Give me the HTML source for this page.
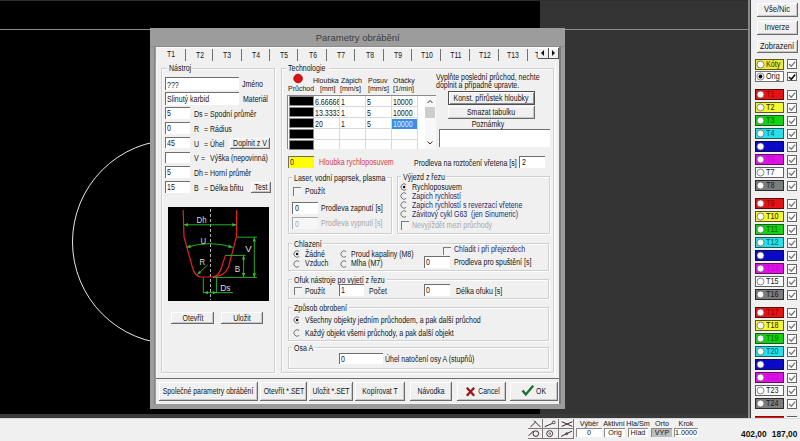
<!DOCTYPE html>
<html><head><meta charset="utf-8"><style>
html,body{margin:0;padding:0;}
body{width:800px;height:441px;position:relative;overflow:hidden;background:#000;font-family:"Liberation Sans",sans-serif;}
.a{position:absolute;}
.t{position:absolute;white-space:nowrap;line-height:1;font-family:"Liberation Sans",sans-serif;transform-origin:0 0;}
svg text{stroke-width:0.2px;}
</style></head><body>

<div class="a" style="left:0.00px;top:0.00px;width:540.00px;height:414.00px;background:#000;"></div>
<div class="a" style="left:540.00px;top:0.00px;width:208.00px;height:418.00px;background:#343434;"></div>
<div class="a" style="left:0.00px;top:0.00px;width:748.00px;height:1.00px;background:#2e2e2e;"></div>
<div class="a" style="left:0.00px;top:414.00px;width:748.00px;height:4.00px;background:#3a3a3a;"></div>
<div class="a" style="left:0.00px;top:28.60px;width:748.00px;height:1.20px;background:#8c8c8c;"></div>
<div class="a" style="left:748.00px;top:0.00px;width:2.00px;height:418.00px;background:#8a8a8a;"></div>
<div class="a" style="left:750.00px;top:0.00px;width:1.00px;height:418.00px;background:#3c3c3c;"></div>
<svg class="a" style="left:0;top:0" width="800" height="441"><circle cx="174.5" cy="242" r="102" fill="none" stroke="#e8e8e8" stroke-width="1"/></svg>
<div class="a" style="left:751.00px;top:0.00px;width:49.00px;height:418.00px;background:#f0f0f0;"></div>
<div class="a" style="left:756.50px;top:3.00px;width:41.00px;height:13.50px;background:#f0f0f0;box-sizing:border-box;border-right:1px solid #6a6a6a;border-bottom:1px solid #6a6a6a;box-shadow:inset 1px 1px #fff, inset -1px -1px #c8c8c8;"></div>
<div class="t" style="left:677.00px;width:200px;text-align:center;top:5.20px;font-size:8.8px;color:#161616;transform-origin:50% 0;transform:scaleX(0.86);">Vše/Nic</div>
<div class="a" style="left:756.50px;top:21.00px;width:41.00px;height:13.50px;background:#f0f0f0;box-sizing:border-box;border-right:1px solid #6a6a6a;border-bottom:1px solid #6a6a6a;box-shadow:inset 1px 1px #fff, inset -1px -1px #c8c8c8;"></div>
<div class="t" style="left:677.00px;width:200px;text-align:center;top:23.20px;font-size:8.8px;color:#161616;transform-origin:50% 0;transform:scaleX(0.86);">Inverze</div>
<div class="a" style="left:756.50px;top:39.50px;width:41.00px;height:13.50px;background:#f0f0f0;box-sizing:border-box;border-right:1px solid #6a6a6a;border-bottom:1px solid #6a6a6a;box-shadow:inset 1px 1px #fff, inset -1px -1px #c8c8c8;"></div>
<div class="t" style="left:677.00px;width:200px;text-align:center;top:41.70px;font-size:8.8px;color:#161616;transform-origin:50% 0;transform:scaleX(0.86);">Zobrazení</div>
<div class="a" style="left:755.00px;top:58.50px;width:29.00px;height:11.00px;background:#eaea40;border:1px solid #5a5a20;box-sizing:border-box;"></div>
<svg class="a" style="left:755px;top:58.5px" width="12" height="11"><circle cx="5.5" cy="5.5" r="3.5" fill="#fff" stroke="#555" stroke-width="0.7"/></svg>
<div class="t" style="left:766.30px;top:59.50px;font-size:8.5px;color:#2a2a00;transform:scaleX(0.85);">Kóty</div>
<div class="a" style="left:787.20px;top:59.10px;width:10.00px;height:9.50px;background:#fff;border:1px solid #666;box-sizing:border-box;"></div>
<svg class="a" style="left:787.2px;top:59.1px" width="10" height="10"><path d="M2 5 L4.3 7.3 L8.2 2.6" fill="none" stroke="#7a7a7a" stroke-width="1.35"/></svg>
<div class="a" style="left:755.00px;top:71.30px;width:29.00px;height:11.00px;background:#fff;border:1px solid #707070;box-sizing:border-box;"></div>
<svg class="a" style="left:755px;top:71.3px" width="12" height="11"><circle cx="5.5" cy="5.5" r="3.5" fill="#fff" stroke="#555" stroke-width="0.7"/><circle cx="5.5" cy="5.5" r="1.9" fill="#000"/></svg>
<div class="t" style="left:766.30px;top:72.30px;font-size:8.5px;color:#111;transform:scaleX(0.85);">Orig</div>
<div class="a" style="left:787.20px;top:71.90px;width:10.00px;height:9.50px;background:#fff;border:1px solid #666;box-sizing:border-box;"></div>
<svg class="a" style="left:787.2px;top:71.89999999999999px" width="10" height="10"><path d="M2 5 L4.3 7.3 L8.2 2.6" fill="none" stroke="#111" stroke-width="1.6"/></svg>
<div class="a" style="left:755.00px;top:89.45px;width:29.00px;height:11.00px;background:#e41414;border:1px solid #5a0a0a;box-sizing:border-box;"></div>
<svg class="a" style="left:755px;top:89.45px" width="12" height="11"><circle cx="5.5" cy="5.5" r="3.5" fill="#fff" stroke="#555" stroke-width="0.7"/></svg>
<div class="t" style="left:766.30px;top:90.45px;font-size:8.5px;color:#8a0000;transform:scaleX(0.85);">T1</div>
<div class="a" style="left:787.20px;top:90.05px;width:10.00px;height:9.50px;background:#fff;border:1px solid #666;box-sizing:border-box;"></div>
<svg class="a" style="left:787.2px;top:90.05px" width="10" height="10"><path d="M2 5 L4.3 7.3 L8.2 2.6" fill="none" stroke="#7a7a7a" stroke-width="1.35"/></svg>
<div class="a" style="left:755.00px;top:102.45px;width:29.00px;height:11.00px;background:#f8f830;border:1px solid #5a5a20;box-sizing:border-box;"></div>
<svg class="a" style="left:755px;top:102.45px" width="12" height="11"><circle cx="5.5" cy="5.5" r="3.5" fill="#fff" stroke="#555" stroke-width="0.7"/></svg>
<div class="t" style="left:766.30px;top:103.45px;font-size:8.5px;color:#202000;transform:scaleX(0.85);">T2</div>
<div class="a" style="left:787.20px;top:103.05px;width:10.00px;height:9.50px;background:#fff;border:1px solid #666;box-sizing:border-box;"></div>
<svg class="a" style="left:787.2px;top:103.05px" width="10" height="10"><path d="M2 5 L4.3 7.3 L8.2 2.6" fill="none" stroke="#7a7a7a" stroke-width="1.35"/></svg>
<div class="a" style="left:755.00px;top:115.45px;width:29.00px;height:11.00px;background:#12d212;border:1px solid #1a5a1a;box-sizing:border-box;"></div>
<svg class="a" style="left:755px;top:115.45px" width="12" height="11"><circle cx="5.5" cy="5.5" r="3.5" fill="#fff" stroke="#555" stroke-width="0.7"/></svg>
<div class="t" style="left:766.30px;top:116.45px;font-size:8.5px;color:#006000;transform:scaleX(0.85);">T3</div>
<div class="a" style="left:787.20px;top:116.05px;width:10.00px;height:9.50px;background:#fff;border:1px solid #666;box-sizing:border-box;"></div>
<svg class="a" style="left:787.2px;top:116.05px" width="10" height="10"><path d="M2 5 L4.3 7.3 L8.2 2.6" fill="none" stroke="#7a7a7a" stroke-width="1.35"/></svg>
<div class="a" style="left:755.00px;top:128.45px;width:29.00px;height:11.00px;background:#28e0e8;border:1px solid #1a5a60;box-sizing:border-box;"></div>
<svg class="a" style="left:755px;top:128.45px" width="12" height="11"><circle cx="5.5" cy="5.5" r="3.5" fill="#fff" stroke="#555" stroke-width="0.7"/></svg>
<div class="t" style="left:766.30px;top:129.45px;font-size:8.5px;color:#005a60;transform:scaleX(0.85);">T4</div>
<div class="a" style="left:787.20px;top:129.05px;width:10.00px;height:9.50px;background:#fff;border:1px solid #666;box-sizing:border-box;"></div>
<svg class="a" style="left:787.2px;top:129.04999999999998px" width="10" height="10"><path d="M2 5 L4.3 7.3 L8.2 2.6" fill="none" stroke="#7a7a7a" stroke-width="1.35"/></svg>
<div class="a" style="left:755.00px;top:141.45px;width:29.00px;height:11.00px;background:#0a0ac8;border:1px solid #0a0a50;box-sizing:border-box;"></div>
<svg class="a" style="left:755px;top:141.45px" width="12" height="11"><circle cx="5.5" cy="5.5" r="3.5" fill="#fff" stroke="#555" stroke-width="0.7"/></svg>
<div class="t" style="left:766.30px;top:142.45px;font-size:8.5px;color:#0808c0;transform:scaleX(0.85);">T5</div>
<div class="a" style="left:787.20px;top:142.05px;width:10.00px;height:9.50px;background:#fff;border:1px solid #666;box-sizing:border-box;"></div>
<svg class="a" style="left:787.2px;top:142.04999999999998px" width="10" height="10"><path d="M2 5 L4.3 7.3 L8.2 2.6" fill="none" stroke="#7a7a7a" stroke-width="1.35"/></svg>
<div class="a" style="left:755.00px;top:154.45px;width:29.00px;height:11.00px;background:#e010e8;border:1px solid #601060;box-sizing:border-box;"></div>
<svg class="a" style="left:755px;top:154.45px" width="12" height="11"><circle cx="5.5" cy="5.5" r="3.5" fill="#fff" stroke="#555" stroke-width="0.7"/></svg>
<div class="t" style="left:766.30px;top:155.45px;font-size:8.5px;color:#c008c8;transform:scaleX(0.85);">T6</div>
<div class="a" style="left:787.20px;top:155.05px;width:10.00px;height:9.50px;background:#fff;border:1px solid #666;box-sizing:border-box;"></div>
<svg class="a" style="left:787.2px;top:155.04999999999998px" width="10" height="10"><path d="M2 5 L4.3 7.3 L8.2 2.6" fill="none" stroke="#7a7a7a" stroke-width="1.35"/></svg>
<div class="a" style="left:755.00px;top:167.45px;width:29.00px;height:11.00px;background:#ffffff;border:1px solid #606060;box-sizing:border-box;"></div>
<svg class="a" style="left:755px;top:167.45px" width="12" height="11"><circle cx="5.5" cy="5.5" r="3.5" fill="#fff" stroke="#555" stroke-width="0.7"/></svg>
<div class="t" style="left:766.30px;top:168.45px;font-size:8.5px;color:#111;transform:scaleX(0.85);">T7</div>
<div class="a" style="left:787.20px;top:168.05px;width:10.00px;height:9.50px;background:#fff;border:1px solid #666;box-sizing:border-box;"></div>
<svg class="a" style="left:787.2px;top:168.04999999999998px" width="10" height="10"><path d="M2 5 L4.3 7.3 L8.2 2.6" fill="none" stroke="#7a7a7a" stroke-width="1.35"/></svg>
<div class="a" style="left:755.00px;top:180.45px;width:29.00px;height:11.00px;background:#7c7c7c;border:1px solid #2a2a2a;box-sizing:border-box;"></div>
<svg class="a" style="left:755px;top:180.45px" width="12" height="11"><circle cx="5.5" cy="5.5" r="3.5" fill="#fff" stroke="#555" stroke-width="0.7"/></svg>
<div class="t" style="left:766.30px;top:181.45px;font-size:8.5px;color:#1a1a1a;transform:scaleX(0.85);">T8</div>
<div class="a" style="left:787.20px;top:181.05px;width:10.00px;height:9.50px;background:#fff;border:1px solid #666;box-sizing:border-box;"></div>
<svg class="a" style="left:787.2px;top:181.04999999999998px" width="10" height="10"><path d="M2 5 L4.3 7.3 L8.2 2.6" fill="none" stroke="#7a7a7a" stroke-width="1.35"/></svg>
<div class="a" style="left:755.00px;top:198.45px;width:29.00px;height:11.00px;background:#e41414;border:1px solid #5a0a0a;box-sizing:border-box;"></div>
<svg class="a" style="left:755px;top:198.45px" width="12" height="11"><circle cx="5.5" cy="5.5" r="3.5" fill="#fff" stroke="#555" stroke-width="0.7"/></svg>
<div class="t" style="left:766.30px;top:199.45px;font-size:8.5px;color:#8a0000;transform:scaleX(0.85);">T9</div>
<div class="a" style="left:787.20px;top:199.05px;width:10.00px;height:9.50px;background:#fff;border:1px solid #666;box-sizing:border-box;"></div>
<svg class="a" style="left:787.2px;top:199.04999999999998px" width="10" height="10"><path d="M2 5 L4.3 7.3 L8.2 2.6" fill="none" stroke="#7a7a7a" stroke-width="1.35"/></svg>
<div class="a" style="left:755.00px;top:211.45px;width:29.00px;height:11.00px;background:#f8f830;border:1px solid #5a5a20;box-sizing:border-box;"></div>
<svg class="a" style="left:755px;top:211.45px" width="12" height="11"><circle cx="5.5" cy="5.5" r="3.5" fill="#fff" stroke="#555" stroke-width="0.7"/></svg>
<div class="t" style="left:766.30px;top:212.45px;font-size:8.5px;color:#202000;transform:scaleX(0.85);">T10</div>
<div class="a" style="left:787.20px;top:212.05px;width:10.00px;height:9.50px;background:#fff;border:1px solid #666;box-sizing:border-box;"></div>
<svg class="a" style="left:787.2px;top:212.04999999999998px" width="10" height="10"><path d="M2 5 L4.3 7.3 L8.2 2.6" fill="none" stroke="#7a7a7a" stroke-width="1.35"/></svg>
<div class="a" style="left:755.00px;top:224.45px;width:29.00px;height:11.00px;background:#12d212;border:1px solid #1a5a1a;box-sizing:border-box;"></div>
<svg class="a" style="left:755px;top:224.45px" width="12" height="11"><circle cx="5.5" cy="5.5" r="3.5" fill="#fff" stroke="#555" stroke-width="0.7"/></svg>
<div class="t" style="left:766.30px;top:225.45px;font-size:8.5px;color:#006000;transform:scaleX(0.85);">T11</div>
<div class="a" style="left:787.20px;top:225.05px;width:10.00px;height:9.50px;background:#fff;border:1px solid #666;box-sizing:border-box;"></div>
<svg class="a" style="left:787.2px;top:225.04999999999998px" width="10" height="10"><path d="M2 5 L4.3 7.3 L8.2 2.6" fill="none" stroke="#7a7a7a" stroke-width="1.35"/></svg>
<div class="a" style="left:755.00px;top:237.45px;width:29.00px;height:11.00px;background:#28e0e8;border:1px solid #1a5a60;box-sizing:border-box;"></div>
<svg class="a" style="left:755px;top:237.45px" width="12" height="11"><circle cx="5.5" cy="5.5" r="3.5" fill="#fff" stroke="#555" stroke-width="0.7"/></svg>
<div class="t" style="left:766.30px;top:238.45px;font-size:8.5px;color:#005a60;transform:scaleX(0.85);">T12</div>
<div class="a" style="left:787.20px;top:238.05px;width:10.00px;height:9.50px;background:#fff;border:1px solid #666;box-sizing:border-box;"></div>
<svg class="a" style="left:787.2px;top:238.04999999999998px" width="10" height="10"><path d="M2 5 L4.3 7.3 L8.2 2.6" fill="none" stroke="#7a7a7a" stroke-width="1.35"/></svg>
<div class="a" style="left:755.00px;top:250.45px;width:29.00px;height:11.00px;background:#0a0ac8;border:1px solid #0a0a50;box-sizing:border-box;"></div>
<svg class="a" style="left:755px;top:250.45px" width="12" height="11"><circle cx="5.5" cy="5.5" r="3.5" fill="#fff" stroke="#555" stroke-width="0.7"/></svg>
<div class="t" style="left:766.30px;top:251.45px;font-size:8.5px;color:#0808c0;transform:scaleX(0.85);">T13</div>
<div class="a" style="left:787.20px;top:251.05px;width:10.00px;height:9.50px;background:#fff;border:1px solid #666;box-sizing:border-box;"></div>
<svg class="a" style="left:787.2px;top:251.04999999999998px" width="10" height="10"><path d="M2 5 L4.3 7.3 L8.2 2.6" fill="none" stroke="#7a7a7a" stroke-width="1.35"/></svg>
<div class="a" style="left:755.00px;top:263.45px;width:29.00px;height:11.00px;background:#e010e8;border:1px solid #601060;box-sizing:border-box;"></div>
<svg class="a" style="left:755px;top:263.45px" width="12" height="11"><circle cx="5.5" cy="5.5" r="3.5" fill="#fff" stroke="#555" stroke-width="0.7"/></svg>
<div class="t" style="left:766.30px;top:264.45px;font-size:8.5px;color:#c008c8;transform:scaleX(0.85);">T14</div>
<div class="a" style="left:787.20px;top:264.05px;width:10.00px;height:9.50px;background:#fff;border:1px solid #666;box-sizing:border-box;"></div>
<svg class="a" style="left:787.2px;top:264.05px" width="10" height="10"><path d="M2 5 L4.3 7.3 L8.2 2.6" fill="none" stroke="#7a7a7a" stroke-width="1.35"/></svg>
<div class="a" style="left:755.00px;top:276.45px;width:29.00px;height:11.00px;background:#ffffff;border:1px solid #606060;box-sizing:border-box;"></div>
<svg class="a" style="left:755px;top:276.45px" width="12" height="11"><circle cx="5.5" cy="5.5" r="3.5" fill="#fff" stroke="#555" stroke-width="0.7"/></svg>
<div class="t" style="left:766.30px;top:277.45px;font-size:8.5px;color:#111;transform:scaleX(0.85);">T15</div>
<div class="a" style="left:787.20px;top:277.05px;width:10.00px;height:9.50px;background:#fff;border:1px solid #666;box-sizing:border-box;"></div>
<svg class="a" style="left:787.2px;top:277.05px" width="10" height="10"><path d="M2 5 L4.3 7.3 L8.2 2.6" fill="none" stroke="#7a7a7a" stroke-width="1.35"/></svg>
<div class="a" style="left:755.00px;top:289.45px;width:29.00px;height:11.00px;background:#7c7c7c;border:1px solid #2a2a2a;box-sizing:border-box;"></div>
<svg class="a" style="left:755px;top:289.45px" width="12" height="11"><circle cx="5.5" cy="5.5" r="3.5" fill="#fff" stroke="#555" stroke-width="0.7"/></svg>
<div class="t" style="left:766.30px;top:290.45px;font-size:8.5px;color:#1a1a1a;transform:scaleX(0.85);">T16</div>
<div class="a" style="left:787.20px;top:290.05px;width:10.00px;height:9.50px;background:#fff;border:1px solid #666;box-sizing:border-box;"></div>
<svg class="a" style="left:787.2px;top:290.05px" width="10" height="10"><path d="M2 5 L4.3 7.3 L8.2 2.6" fill="none" stroke="#7a7a7a" stroke-width="1.35"/></svg>
<div class="a" style="left:755.00px;top:307.45px;width:29.00px;height:11.00px;background:#e41414;border:1px solid #5a0a0a;box-sizing:border-box;"></div>
<svg class="a" style="left:755px;top:307.45px" width="12" height="11"><circle cx="5.5" cy="5.5" r="3.5" fill="#fff" stroke="#555" stroke-width="0.7"/></svg>
<div class="t" style="left:766.30px;top:308.45px;font-size:8.5px;color:#8a0000;transform:scaleX(0.85);">T17</div>
<div class="a" style="left:787.20px;top:308.05px;width:10.00px;height:9.50px;background:#fff;border:1px solid #666;box-sizing:border-box;"></div>
<svg class="a" style="left:787.2px;top:308.05px" width="10" height="10"><path d="M2 5 L4.3 7.3 L8.2 2.6" fill="none" stroke="#7a7a7a" stroke-width="1.35"/></svg>
<div class="a" style="left:755.00px;top:320.45px;width:29.00px;height:11.00px;background:#f8f830;border:1px solid #5a5a20;box-sizing:border-box;"></div>
<svg class="a" style="left:755px;top:320.45px" width="12" height="11"><circle cx="5.5" cy="5.5" r="3.5" fill="#fff" stroke="#555" stroke-width="0.7"/></svg>
<div class="t" style="left:766.30px;top:321.45px;font-size:8.5px;color:#202000;transform:scaleX(0.85);">T18</div>
<div class="a" style="left:787.20px;top:321.05px;width:10.00px;height:9.50px;background:#fff;border:1px solid #666;box-sizing:border-box;"></div>
<svg class="a" style="left:787.2px;top:321.05px" width="10" height="10"><path d="M2 5 L4.3 7.3 L8.2 2.6" fill="none" stroke="#7a7a7a" stroke-width="1.35"/></svg>
<div class="a" style="left:755.00px;top:333.45px;width:29.00px;height:11.00px;background:#12d212;border:1px solid #1a5a1a;box-sizing:border-box;"></div>
<svg class="a" style="left:755px;top:333.45px" width="12" height="11"><circle cx="5.5" cy="5.5" r="3.5" fill="#fff" stroke="#555" stroke-width="0.7"/></svg>
<div class="t" style="left:766.30px;top:334.45px;font-size:8.5px;color:#006000;transform:scaleX(0.85);">T19</div>
<div class="a" style="left:787.20px;top:334.05px;width:10.00px;height:9.50px;background:#fff;border:1px solid #666;box-sizing:border-box;"></div>
<svg class="a" style="left:787.2px;top:334.05px" width="10" height="10"><path d="M2 5 L4.3 7.3 L8.2 2.6" fill="none" stroke="#7a7a7a" stroke-width="1.35"/></svg>
<div class="a" style="left:755.00px;top:346.45px;width:29.00px;height:11.00px;background:#28e0e8;border:1px solid #1a5a60;box-sizing:border-box;"></div>
<svg class="a" style="left:755px;top:346.45px" width="12" height="11"><circle cx="5.5" cy="5.5" r="3.5" fill="#fff" stroke="#555" stroke-width="0.7"/></svg>
<div class="t" style="left:766.30px;top:347.45px;font-size:8.5px;color:#005a60;transform:scaleX(0.85);">T20</div>
<div class="a" style="left:787.20px;top:347.05px;width:10.00px;height:9.50px;background:#fff;border:1px solid #666;box-sizing:border-box;"></div>
<svg class="a" style="left:787.2px;top:347.05px" width="10" height="10"><path d="M2 5 L4.3 7.3 L8.2 2.6" fill="none" stroke="#7a7a7a" stroke-width="1.35"/></svg>
<div class="a" style="left:755.00px;top:359.45px;width:29.00px;height:11.00px;background:#0a0ac8;border:1px solid #0a0a50;box-sizing:border-box;"></div>
<svg class="a" style="left:755px;top:359.45px" width="12" height="11"><circle cx="5.5" cy="5.5" r="3.5" fill="#fff" stroke="#555" stroke-width="0.7"/></svg>
<div class="t" style="left:766.30px;top:360.45px;font-size:8.5px;color:#0808c0;transform:scaleX(0.85);">T21</div>
<div class="a" style="left:787.20px;top:360.05px;width:10.00px;height:9.50px;background:#fff;border:1px solid #666;box-sizing:border-box;"></div>
<svg class="a" style="left:787.2px;top:360.05px" width="10" height="10"><path d="M2 5 L4.3 7.3 L8.2 2.6" fill="none" stroke="#7a7a7a" stroke-width="1.35"/></svg>
<div class="a" style="left:755.00px;top:372.45px;width:29.00px;height:11.00px;background:#e010e8;border:1px solid #601060;box-sizing:border-box;"></div>
<svg class="a" style="left:755px;top:372.45px" width="12" height="11"><circle cx="5.5" cy="5.5" r="3.5" fill="#fff" stroke="#555" stroke-width="0.7"/></svg>
<div class="t" style="left:766.30px;top:373.45px;font-size:8.5px;color:#c008c8;transform:scaleX(0.85);">T22</div>
<div class="a" style="left:787.20px;top:373.05px;width:10.00px;height:9.50px;background:#fff;border:1px solid #666;box-sizing:border-box;"></div>
<svg class="a" style="left:787.2px;top:373.05px" width="10" height="10"><path d="M2 5 L4.3 7.3 L8.2 2.6" fill="none" stroke="#7a7a7a" stroke-width="1.35"/></svg>
<div class="a" style="left:755.00px;top:385.45px;width:29.00px;height:11.00px;background:#ffffff;border:1px solid #606060;box-sizing:border-box;"></div>
<svg class="a" style="left:755px;top:385.45px" width="12" height="11"><circle cx="5.5" cy="5.5" r="3.5" fill="#fff" stroke="#555" stroke-width="0.7"/></svg>
<div class="t" style="left:766.30px;top:386.45px;font-size:8.5px;color:#111;transform:scaleX(0.85);">T23</div>
<div class="a" style="left:787.20px;top:386.05px;width:10.00px;height:9.50px;background:#fff;border:1px solid #666;box-sizing:border-box;"></div>
<svg class="a" style="left:787.2px;top:386.05px" width="10" height="10"><path d="M2 5 L4.3 7.3 L8.2 2.6" fill="none" stroke="#7a7a7a" stroke-width="1.35"/></svg>
<div class="a" style="left:755.00px;top:398.45px;width:29.00px;height:11.00px;background:#7c7c7c;border:1px solid #2a2a2a;box-sizing:border-box;"></div>
<svg class="a" style="left:755px;top:398.45px" width="12" height="11"><circle cx="5.5" cy="5.5" r="3.5" fill="#fff" stroke="#555" stroke-width="0.7"/></svg>
<div class="t" style="left:766.30px;top:399.45px;font-size:8.5px;color:#1a1a1a;transform:scaleX(0.85);">T24</div>
<div class="a" style="left:787.20px;top:399.05px;width:10.00px;height:9.50px;background:#fff;border:1px solid #666;box-sizing:border-box;"></div>
<svg class="a" style="left:787.2px;top:399.05px" width="10" height="10"><path d="M2 5 L4.3 7.3 L8.2 2.6" fill="none" stroke="#7a7a7a" stroke-width="1.35"/></svg>
<div class="a" style="left:755.00px;top:415.80px;width:29.00px;height:3.00px;background:#e41414;border-top:1px solid #7a1010;box-sizing:border-box;"></div>
<div class="a" style="left:787.20px;top:416.30px;width:10.00px;height:2.00px;border-top:1px solid #5a5a5a;box-sizing:border-box;background:#fff;"></div>
<div class="a" style="left:0.00px;top:418.00px;width:800.00px;height:23.00px;background:#f0f0f0;border-top:1px solid #dadada;box-sizing:border-box;"></div>
<div class="a" style="left:528.00px;top:419.00px;width:15.30px;height:10.00px;background:#f0f0f0;border-right:1px solid #7a7a7a;border-bottom:1px solid #7a7a7a;box-sizing:border-box;"></div>
<svg class="a" style="left:528.0px;top:419px" width="15" height="10"><path d="M2.4 8 L7.6 3 M6 1.6 L12.4 8" stroke="#3a2626" fill="none" stroke-width="1"/></svg>
<div class="a" style="left:543.30px;top:419.00px;width:15.30px;height:10.00px;background:#f0f0f0;border-right:1px solid #7a7a7a;border-bottom:1px solid #7a7a7a;box-sizing:border-box;"></div>
<svg class="a" style="left:543.3px;top:419px" width="15" height="10"><path d="M1.7 7.7 L9.6 4.3" stroke="#3a2626" fill="none" stroke-width="1"/><circle cx="10.8" cy="3.4" r="1.4" fill="none" stroke="#3a2626" stroke-width="0.8"/></svg>
<div class="a" style="left:558.60px;top:419.00px;width:15.30px;height:10.00px;background:#f0f0f0;border-right:1px solid #7a7a7a;border-bottom:1px solid #7a7a7a;box-sizing:border-box;"></div>
<svg class="a" style="left:558.6px;top:419px" width="15" height="10"><path d="M2.7 2.7 L13.3 7.4 M2.7 7.4 L13.3 2.7" stroke="#3a2626" fill="none" stroke-width="1"/></svg>
<div class="a" style="left:528.00px;top:429.00px;width:15.30px;height:10.00px;background:#f0f0f0;border-right:1px solid #7a7a7a;border-bottom:1px solid #7a7a7a;box-sizing:border-box;"></div>
<svg class="a" style="left:528.0px;top:429px" width="15" height="10"><path d="M0.6 6.8 L5.6 1.8" stroke="#3a2626" fill="none" stroke-width="1"/><circle cx="7.8" cy="4.6" r="2.8" fill="none" stroke="#3a2626" stroke-width="1"/></svg>
<div class="a" style="left:543.30px;top:429.00px;width:15.30px;height:10.00px;background:#f0f0f0;border-right:1px solid #7a7a7a;border-bottom:1px solid #7a7a7a;box-sizing:border-box;"></div>
<svg class="a" style="left:543.3px;top:429px" width="15" height="10"><circle cx="6.7" cy="4.6" r="3" fill="none" stroke="#3a2626" stroke-width="0.9"/><circle cx="6.7" cy="4.6" r="0.9" fill="none" stroke="#3a2626" stroke-width="0.6"/></svg>
<div class="a" style="left:558.60px;top:429.00px;width:15.30px;height:10.00px;background:#f0f0f0;border-right:1px solid #7a7a7a;border-bottom:1px solid #7a7a7a;box-sizing:border-box;"></div>
<svg class="a" style="left:558.6px;top:429px" width="15" height="10"><path d="M2.1 7.4 L13 2.1" stroke="#3a2626" fill="none" stroke-width="1"/><circle cx="7.7" cy="4.7" r="1.1" fill="none" stroke="#3a2626" stroke-width="0.7"/></svg>
<div class="t" style="left:489.00px;width:200px;text-align:center;top:419.80px;font-size:7.8px;color:#161616;transform-origin:50% 0;transform:scaleX(0.92);">Výběr</div>
<div class="t" style="left:513.50px;width:200px;text-align:center;top:419.80px;font-size:7.8px;color:#161616;transform-origin:50% 0;transform:scaleX(0.92);">Aktivní</div>
<div class="t" style="left:538.00px;width:200px;text-align:center;top:419.80px;font-size:7.8px;color:#161616;transform-origin:50% 0;transform:scaleX(0.92);">Hla/Sm</div>
<div class="t" style="left:562.00px;width:200px;text-align:center;top:419.80px;font-size:7.8px;color:#161616;transform-origin:50% 0;transform:scaleX(0.92);">Orto</div>
<div class="t" style="left:586.00px;width:200px;text-align:center;top:419.80px;font-size:7.8px;color:#161616;transform-origin:50% 0;transform:scaleX(0.92);">Krok</div>
<div class="a" style="left:575.70px;top:428.40px;width:26.00px;height:8.60px;background:#fff;border-top:1px solid #8a8a8a;border-left:1px solid #8a8a8a;box-sizing:border-box;"></div>
<div class="t" style="left:489.20px;width:200px;text-align:center;top:428.90px;font-size:7.8px;color:#161616;transform-origin:50% 0;transform:scaleX(0.92);">0</div>
<div class="a" style="left:604.00px;top:428.40px;width:20.50px;height:8.60px;background:#fff;border-top:1px solid #8a8a8a;border-left:1px solid #8a8a8a;box-sizing:border-box;"></div>
<div class="t" style="left:514.75px;width:200px;text-align:center;top:428.90px;font-size:7.8px;color:#161616;transform-origin:50% 0;transform:scaleX(0.92);">Orig</div>
<div class="a" style="left:627.70px;top:428.40px;width:20.30px;height:8.60px;background:#fff;border-top:1px solid #8a8a8a;border-left:1px solid #8a8a8a;box-sizing:border-box;"></div>
<div class="t" style="left:538.35px;width:200px;text-align:center;top:428.90px;font-size:7.8px;color:#161616;transform-origin:50% 0;transform:scaleX(0.92);">Hlad</div>
<div class="a" style="left:651.00px;top:428.40px;width:20.60px;height:8.60px;background:#bdbdbd;border-top:1px solid #8a8a8a;border-left:1px solid #8a8a8a;box-sizing:border-box;"></div>
<div class="t" style="left:561.80px;width:200px;text-align:center;top:428.90px;font-size:7.8px;color:#161616;transform-origin:50% 0;transform:scaleX(0.92);">VYP</div>
<div class="a" style="left:674.00px;top:428.40px;width:23.60px;height:8.60px;background:#fff;border-top:1px solid #8a8a8a;border-left:1px solid #8a8a8a;box-sizing:border-box;"></div>
<div class="t" style="left:586.30px;width:200px;text-align:center;top:428.90px;font-size:7.8px;color:#161616;transform-origin:50% 0;transform:scaleX(0.92);">1.0000</div>
<div class="t" style="left:741.00px;top:430.39px;font-size:8.4px;color:#111;font-weight:bold;">402,00</div>
<div class="t" style="left:771.80px;top:430.39px;font-size:8.4px;color:#111;font-weight:bold;">187,00</div>
<div class="a" style="left:150.20px;top:27.50px;width:414.80px;height:381.50px;background:#9c9c9c;"></div>
<div class="t" style="left:257.70px;width:200px;text-align:center;top:32.86px;font-size:9.5px;color:#3c3c3c;transform-origin:50% 0;">Parametry obrábění</div>
<div class="a" style="left:150.20px;top:46.30px;width:414.80px;height:1.00px;background:#8c8c8c;"></div>
<div class="a" style="left:154.30px;top:47.30px;width:1.20px;height:357.00px;background:#858585;"></div>
<div class="a" style="left:559.00px;top:47.30px;width:2.00px;height:357.00px;background:#7c7c7c;"></div>
<div class="a" style="left:155.50px;top:47.30px;width:403.50px;height:356.70px;background:#f0f0f0;border-top:1px solid #fafafa;box-sizing:border-box;"></div>
<div class="a" style="left:156.20px;top:61.20px;width:1.00px;height:317.50px;background:#fafafa;"></div>
<div class="a" style="left:555.00px;top:61.20px;width:1.00px;height:317.50px;background:#fafafa;"></div>
<div class="a" style="left:156.00px;top:378.40px;width:403.00px;height:1.00px;background:#6e6e6e;"></div>
<div class="a" style="left:185.00px;top:48.50px;width:1.00px;height:12.50px;background:#707070;"></div>
<div class="a" style="left:212.00px;top:48.50px;width:1.00px;height:12.50px;background:#707070;"></div>
<div class="a" style="left:241.00px;top:48.50px;width:1.00px;height:12.50px;background:#707070;"></div>
<div class="a" style="left:269.00px;top:48.50px;width:1.00px;height:12.50px;background:#707070;"></div>
<div class="a" style="left:297.00px;top:48.50px;width:1.00px;height:12.50px;background:#707070;"></div>
<div class="a" style="left:326.00px;top:48.50px;width:1.00px;height:12.50px;background:#707070;"></div>
<div class="a" style="left:354.00px;top:48.50px;width:1.00px;height:12.50px;background:#707070;"></div>
<div class="a" style="left:383.00px;top:48.50px;width:1.00px;height:12.50px;background:#707070;"></div>
<div class="a" style="left:411.00px;top:48.50px;width:1.00px;height:12.50px;background:#707070;"></div>
<div class="a" style="left:440.00px;top:48.50px;width:1.00px;height:12.50px;background:#707070;"></div>
<div class="a" style="left:469.00px;top:48.50px;width:1.00px;height:12.50px;background:#707070;"></div>
<div class="a" style="left:498.00px;top:48.50px;width:1.00px;height:12.50px;background:#707070;"></div>
<div class="a" style="left:527.00px;top:48.50px;width:1.00px;height:12.50px;background:#707070;"></div>
<div class="t" style="left:71.20px;width:200px;text-align:center;top:50.66px;font-size:8.2px;color:#161616;transform-origin:50% 0;transform:scaleX(0.835);">T1</div>
<div class="t" style="left:99.65px;width:200px;text-align:center;top:52.06px;font-size:8.2px;color:#161616;transform-origin:50% 0;transform:scaleX(0.835);">T2</div>
<div class="t" style="left:127.40px;width:200px;text-align:center;top:52.06px;font-size:8.2px;color:#161616;transform-origin:50% 0;transform:scaleX(0.835);">T3</div>
<div class="t" style="left:155.75px;width:200px;text-align:center;top:52.06px;font-size:8.2px;color:#161616;transform-origin:50% 0;transform:scaleX(0.835);">T4</div>
<div class="t" style="left:184.15px;width:200px;text-align:center;top:52.06px;font-size:8.2px;color:#161616;transform-origin:50% 0;transform:scaleX(0.835);">T5</div>
<div class="t" style="left:212.52px;width:200px;text-align:center;top:52.06px;font-size:8.2px;color:#161616;transform-origin:50% 0;transform:scaleX(0.835);">T6</div>
<div class="t" style="left:241.00px;width:200px;text-align:center;top:52.06px;font-size:8.2px;color:#161616;transform-origin:50% 0;transform:scaleX(0.835);">T7</div>
<div class="t" style="left:269.68px;width:200px;text-align:center;top:52.06px;font-size:8.2px;color:#161616;transform-origin:50% 0;transform:scaleX(0.835);">T8</div>
<div class="t" style="left:298.25px;width:200px;text-align:center;top:52.06px;font-size:8.2px;color:#161616;transform-origin:50% 0;transform:scaleX(0.835);">T9</div>
<div class="t" style="left:326.70px;width:200px;text-align:center;top:52.06px;font-size:8.2px;color:#161616;transform-origin:50% 0;transform:scaleX(0.835);">T10</div>
<div class="t" style="left:355.50px;width:200px;text-align:center;top:52.06px;font-size:8.2px;color:#161616;transform-origin:50% 0;transform:scaleX(0.835);">T11</div>
<div class="t" style="left:384.50px;width:200px;text-align:center;top:52.06px;font-size:8.2px;color:#161616;transform-origin:50% 0;transform:scaleX(0.835);">T12</div>
<div class="t" style="left:413.30px;width:200px;text-align:center;top:52.06px;font-size:8.2px;color:#161616;transform-origin:50% 0;transform:scaleX(0.835);">T13</div>
<div class="t" style="left:535.30px;top:52.06px;font-size:8.2px;color:#161616;transform:scaleX(0.835);">T</div>
<div class="a" style="left:538.00px;top:48.00px;width:10.50px;height:10.50px;background:#f0f0f0;border-right:1px solid #505050;border-bottom:1px solid #505050;box-shadow:inset 1px 1px #fff;box-sizing:border-box;"></div>
<div class="a" style="left:548.70px;top:48.00px;width:10.50px;height:10.50px;background:#f0f0f0;border-right:1px solid #505050;border-bottom:1px solid #505050;box-shadow:inset 1px 1px #fff;box-sizing:border-box;"></div>
<svg class="a" style="left:538px;top:48px" width="22" height="11"><path d="M3 5 L6 2 L6 8 Z" fill="#111"/><path d="M14 2 L17 5 L14 8 Z" fill="#111"/></svg>
<div class="a" style="left:161.30px;top:67.50px;width:113.70px;height:305.80px;border:1px solid #cfcfcf;box-shadow:inset 1px 1px #fff, 1px 1px #fff;box-sizing:border-box;"></div>
<div class="a" style="left:166.80px;top:64.50px;width:25.50px;height:6.00px;background:#f0f0f0;"></div>
<div class="t" style="left:168.80px;top:64.29px;font-size:8.4px;color:#161616;transform:scaleX(0.835);">Nástroj</div>
<div class="a" style="left:164.70px;top:77.00px;width:74.30px;height:13.00px;background:#fff;border-top:1px solid #6e6e6e;border-left:1px solid #6e6e6e;box-sizing:border-box;"></div>
<div class="t" style="left:166.90px;top:80.55px;font-size:8.8px;color:#161616;transform:scaleX(0.8);">???</div>
<div class="t" style="left:242.10px;top:80.39px;font-size:8.4px;color:#161616;transform:scaleX(0.835);">Jméno</div>
<div class="a" style="left:164.70px;top:92.00px;width:74.30px;height:12.50px;background:#fff;border-top:1px solid #6e6e6e;border-left:1px solid #6e6e6e;box-sizing:border-box;"></div>
<div class="t" style="left:166.90px;top:95.05px;font-size:8.8px;color:#161616;transform:scaleX(0.8);">Slinutý karbid</div>
<div class="t" style="left:242.50px;top:94.99px;font-size:8.4px;color:#161616;transform:scaleX(0.835);">Materiál</div>
<div class="a" style="left:164.70px;top:107.20px;width:25.30px;height:11.50px;background:#fff;border-top:1px solid #6e6e6e;border-left:1px solid #6e6e6e;box-sizing:border-box;"></div>
<div class="t" style="left:166.90px;top:109.25px;font-size:8.8px;color:#161616;transform:scaleX(0.8);">5</div>
<div class="t" style="left:193.70px;top:109.99px;font-size:8.4px;color:#161616;transform:scaleX(0.835);">Ds</div>
<div class="t" style="left:204.30px;top:109.99px;font-size:8.4px;color:#161616;transform:scaleX(0.835);">=</div>
<div class="t" style="left:210.00px;top:109.99px;font-size:8.4px;color:#161616;transform:scaleX(0.835);">Spodní průměr</div>
<div class="a" style="left:164.70px;top:122.00px;width:25.30px;height:11.50px;background:#fff;border-top:1px solid #6e6e6e;border-left:1px solid #6e6e6e;box-sizing:border-box;"></div>
<div class="t" style="left:166.90px;top:124.05px;font-size:8.8px;color:#161616;transform:scaleX(0.8);">0</div>
<div class="t" style="left:193.70px;top:124.79px;font-size:8.4px;color:#161616;transform:scaleX(0.835);">R</div>
<div class="t" style="left:203.80px;top:124.79px;font-size:8.4px;color:#161616;transform:scaleX(0.835);">=</div>
<div class="t" style="left:210.40px;top:124.79px;font-size:8.4px;color:#161616;transform:scaleX(0.835);">Rádius</div>
<div class="a" style="left:164.70px;top:136.80px;width:25.30px;height:11.50px;background:#fff;border-top:1px solid #6e6e6e;border-left:1px solid #6e6e6e;box-sizing:border-box;"></div>
<div class="t" style="left:166.90px;top:138.85px;font-size:8.8px;color:#161616;transform:scaleX(0.8);">45</div>
<div class="t" style="left:193.70px;top:139.59px;font-size:8.4px;color:#161616;transform:scaleX(0.835);">U</div>
<div class="t" style="left:203.80px;top:139.59px;font-size:8.4px;color:#161616;transform:scaleX(0.835);">=</div>
<div class="t" style="left:210.40px;top:139.59px;font-size:8.4px;color:#161616;transform:scaleX(0.835);">Úhel</div>
<div class="a" style="left:164.70px;top:151.60px;width:25.30px;height:11.50px;background:#fff;border-top:1px solid #6e6e6e;border-left:1px solid #6e6e6e;box-sizing:border-box;"></div>
<div class="t" style="left:193.70px;top:154.39px;font-size:8.4px;color:#161616;transform:scaleX(0.835);">V</div>
<div class="t" style="left:200.80px;top:154.39px;font-size:8.4px;color:#161616;transform:scaleX(0.835);">=</div>
<div class="t" style="left:209.60px;top:154.39px;font-size:8.4px;color:#161616;transform:scaleX(0.835);">Výška (nepovinná)</div>
<div class="a" style="left:164.70px;top:166.40px;width:25.30px;height:11.50px;background:#fff;border-top:1px solid #6e6e6e;border-left:1px solid #6e6e6e;box-sizing:border-box;"></div>
<div class="t" style="left:166.90px;top:168.45px;font-size:8.8px;color:#161616;transform:scaleX(0.8);">5</div>
<div class="t" style="left:193.70px;top:169.19px;font-size:8.4px;color:#161616;transform:scaleX(0.835);">Dh</div>
<div class="t" style="left:204.30px;top:169.19px;font-size:8.4px;color:#161616;transform:scaleX(0.835);">=</div>
<div class="t" style="left:210.00px;top:169.19px;font-size:8.4px;color:#161616;transform:scaleX(0.835);">Horní průměr</div>
<div class="a" style="left:164.70px;top:181.20px;width:25.30px;height:11.50px;background:#fff;border-top:1px solid #6e6e6e;border-left:1px solid #6e6e6e;box-sizing:border-box;"></div>
<div class="t" style="left:166.90px;top:183.25px;font-size:8.8px;color:#161616;transform:scaleX(0.8);">15</div>
<div class="t" style="left:193.70px;top:183.99px;font-size:8.4px;color:#161616;transform:scaleX(0.835);">B</div>
<div class="t" style="left:203.80px;top:183.99px;font-size:8.4px;color:#161616;transform:scaleX(0.835);">=</div>
<div class="t" style="left:209.60px;top:183.99px;font-size:8.4px;color:#161616;transform:scaleX(0.835);">Délka břitu</div>
<div class="a" style="left:230.20px;top:138.00px;width:40.30px;height:10.80px;background:#f0f0f0;box-sizing:border-box;border-right:1px solid #6a6a6a;border-bottom:1px solid #6a6a6a;box-shadow:inset 1px 1px #fff, inset -1px -1px #c8c8c8;"></div>
<div class="t" style="left:150.35px;width:200px;text-align:center;top:139.06px;font-size:8.4px;color:#161616;transform-origin:50% 0;transform:scaleX(0.835);">Doplnit z V</div>
<div class="a" style="left:250.50px;top:181.50px;width:20.20px;height:11.50px;background:#f0f0f0;box-sizing:border-box;border-right:1px solid #6a6a6a;border-bottom:1px solid #6a6a6a;box-shadow:inset 1px 1px #fff, inset -1px -1px #c8c8c8;"></div>
<div class="t" style="left:160.60px;width:200px;text-align:center;top:182.91px;font-size:8.4px;color:#161616;transform-origin:50% 0;transform:scaleX(0.835);">Test</div>
<svg class="a" style="left:168px;top:207px" width="101" height="94" viewBox="168 207 101 94">
<rect x="168" y="207" width="101" height="94" fill="#000"/>
<line x1="210.5" y1="209" x2="210.5" y2="300" stroke="#e0e0e0" stroke-width="0.8" stroke-dasharray="3,2"/>
<path d="M183.2 210 L184 237 L192.3 267 Q195 276.6 201 277 L213 277" fill="none" stroke="#e82020" stroke-width="1.2"/>
<path d="M236.6 210 L236.4 237 L228.5 267 Q224 276.8 213 277" fill="none" stroke="#e82020" stroke-width="1.2"/>
<path d="M225.3 255.6 L222 266 Q219 276.5 213 277" fill="none" stroke="#e82020" stroke-width="1.2"/>
<g stroke="#30c030" stroke-width="0.9" fill="none">
<line x1="184" y1="224.8" x2="236.3" y2="224.8"/>
<path d="M186.5 247.3 Q210 240 232.7 247.3"/>
<line x1="237" y1="237.2" x2="257" y2="237.2"/>
<line x1="254.3" y1="237.5" x2="254.3" y2="277.3"/>
<line x1="225" y1="255.4" x2="245.6" y2="255.4"/>
<line x1="243.6" y1="255.6" x2="243.6" y2="277"/>
<line x1="213" y1="277.4" x2="257" y2="277.4"/>
<line x1="203.3" y1="277.5" x2="203.3" y2="292.6"/>
<line x1="216.6" y1="277.5" x2="216.6" y2="292.6"/>
<line x1="203.3" y1="292.6" x2="233" y2="292.6"/>
<line x1="207.6" y1="265" x2="197.4" y2="274.6"/>
</g>
<g fill="#30c030">
<path d="M184 224.8 L188 223 L188 226.6 Z"/><path d="M236.3 224.8 L232.3 223 L232.3 226.6 Z"/>
<path d="M254.3 237.5 L252.6 241.5 L256 241.5 Z"/><path d="M254.3 277.3 L252.6 273.3 L256 273.3 Z"/>
<path d="M243.6 255.6 L241.9 259.6 L245.3 259.6 Z"/><path d="M243.6 277 L241.9 273 L245.3 273 Z"/>
<path d="M204 292.6 L208 291 L208 294.2 Z"/><path d="M216.6 292.6 L212.6 291 L212.6 294.2 Z"/>
<path d="M197.4 274.6 L199 270.8 L201.3 273 Z"/>
<path d="M186.5 247.3 L190.5 244.6 L190.8 248 Z"/><path d="M232.7 247.3 L228.7 244.6 L228.4 248 Z"/>
</g>
<g fill="#dcdcdc" font-family="Liberation Sans" font-size="8.8">
<text x="196.5" y="222.7" textLength="10" lengthAdjust="spacingAndGlyphs">Dh</text>
<text x="200.6" y="243.8" textLength="5.6" lengthAdjust="spacingAndGlyphs">U</text>
<text x="245.2" y="251.6" textLength="6.4" lengthAdjust="spacingAndGlyphs">V</text>
<text x="199.6" y="265.2" textLength="5.6" lengthAdjust="spacingAndGlyphs">R</text>
<text x="234.8" y="272.2" textLength="5.4" lengthAdjust="spacingAndGlyphs">B</text>
<text x="220.2" y="291" textLength="10.4" lengthAdjust="spacingAndGlyphs">Ds</text>
</g>
</svg>
<div class="a" style="left:171.30px;top:312.20px;width:42.70px;height:12.30px;background:#f0f0f0;box-sizing:border-box;border-right:1px solid #6a6a6a;border-bottom:1px solid #6a6a6a;box-shadow:inset 1px 1px #fff, inset -1px -1px #c8c8c8;"></div>
<div class="t" style="left:92.65px;width:200px;text-align:center;top:314.01px;font-size:8.4px;color:#161616;transform-origin:50% 0;transform:scaleX(0.835);">Otevřít</div>
<div class="a" style="left:220.60px;top:312.20px;width:42.70px;height:12.30px;background:#f0f0f0;box-sizing:border-box;border-right:1px solid #6a6a6a;border-bottom:1px solid #6a6a6a;box-shadow:inset 1px 1px #fff, inset -1px -1px #c8c8c8;"></div>
<div class="t" style="left:141.95px;width:200px;text-align:center;top:314.01px;font-size:8.4px;color:#161616;transform-origin:50% 0;transform:scaleX(0.835);">Uložit</div>
<div class="a" style="left:280.80px;top:67.60px;width:273.20px;height:305.70px;border:1px solid #cfcfcf;box-shadow:inset 1px 1px #fff, 1px 1px #fff;box-sizing:border-box;"></div>
<div class="a" style="left:286.00px;top:64.60px;width:42.50px;height:6.00px;background:#f0f0f0;"></div>
<div class="t" style="left:288.00px;top:64.39px;font-size:8.4px;color:#161616;transform:scaleX(0.835);">Technologie</div>
<svg class="a" style="left:292px;top:72px" width="13" height="13"><circle cx="6.1" cy="6.5" r="4.3" fill="#dd1111" stroke="#8a0000" stroke-width="0.8"/></svg>
<div class="t" style="left:287.60px;top:84.58px;font-size:7.7px;color:#161616;transform:scaleX(0.91);">Průchod</div>
<div class="t" style="left:313.40px;top:77.38px;font-size:7.7px;color:#161616;transform:scaleX(0.91);">Hloubka</div>
<div class="t" style="left:319.80px;top:84.58px;font-size:7.7px;color:#161616;transform:scaleX(0.91);">[mm]</div>
<div class="t" style="left:340.90px;top:77.38px;font-size:7.7px;color:#161616;transform:scaleX(0.91);">Zápich</div>
<div class="t" style="left:340.40px;top:84.58px;font-size:7.7px;color:#161616;transform:scaleX(0.91);">[mm/s]</div>
<div class="t" style="left:367.80px;top:77.38px;font-size:7.7px;color:#161616;transform:scaleX(0.91);">Posuv</div>
<div class="t" style="left:367.80px;top:84.58px;font-size:7.7px;color:#161616;transform:scaleX(0.91);">[mm/s]</div>
<div class="t" style="left:393.30px;top:77.38px;font-size:7.7px;color:#161616;transform:scaleX(0.91);">Otáčky</div>
<div class="t" style="left:393.30px;top:84.58px;font-size:7.7px;color:#161616;transform:scaleX(0.91);">[1/min]</div>
<div class="a" style="left:287.10px;top:95.20px;width:148.50px;height:53.50px;background:#fff;border-top:1px solid #8a8a8a;border-left:1px solid #8a8a8a;box-sizing:border-box;"></div>
<div class="a" style="left:288.60px;top:96.40px;width:25.30px;height:9.80px;background:#000;border:1px solid #8a8a8a;box-sizing:border-box;"></div>
<div class="a" style="left:313.90px;top:106.20px;width:104.00px;height:1.00px;background:#d8d8d8;"></div>
<div class="a" style="left:288.60px;top:107.35px;width:25.30px;height:9.80px;background:#000;border:1px solid #8a8a8a;box-sizing:border-box;"></div>
<div class="a" style="left:313.90px;top:117.15px;width:104.00px;height:1.00px;background:#d8d8d8;"></div>
<div class="a" style="left:288.60px;top:118.30px;width:25.30px;height:9.80px;background:#000;border:1px solid #8a8a8a;box-sizing:border-box;"></div>
<div class="a" style="left:313.90px;top:128.10px;width:104.00px;height:1.00px;background:#d8d8d8;"></div>
<div class="a" style="left:288.60px;top:129.25px;width:25.30px;height:9.80px;background:#000;border:1px solid #8a8a8a;box-sizing:border-box;"></div>
<div class="a" style="left:313.90px;top:139.05px;width:104.00px;height:1.00px;background:#d8d8d8;"></div>
<div class="a" style="left:288.60px;top:140.20px;width:25.30px;height:9.80px;background:#000;border:1px solid #8a8a8a;box-sizing:border-box;"></div>
<div class="a" style="left:339.00px;top:96.00px;width:1.00px;height:52.50px;background:#d8d8d8;"></div>
<div class="a" style="left:365.00px;top:96.00px;width:1.00px;height:52.50px;background:#d8d8d8;"></div>
<div class="a" style="left:391.00px;top:96.00px;width:1.00px;height:52.50px;background:#d8d8d8;"></div>
<div class="a" style="left:417.00px;top:96.00px;width:1.00px;height:52.50px;background:#d8d8d8;"></div>
<div class="a" style="left:314.8px;top:96.7px;width:24.7px;height:10px;overflow:hidden;"><div class="t" style="left:0.5px;top:1.15px;font-size:8.8px;color:#161616;transform:scaleX(0.8)">6.666666</div></div>
<div class="t" style="left:341.20px;top:97.85px;font-size:8.8px;color:#161616;transform:scaleX(0.8);">1</div>
<div class="t" style="left:367.30px;top:97.85px;font-size:8.8px;color:#161616;transform:scaleX(0.8);">5</div>
<div class="t" style="left:393.00px;top:97.85px;font-size:8.8px;color:#161616;transform:scaleX(0.8);">10000</div>
<div class="a" style="left:314.8px;top:107.65px;width:24.7px;height:10px;overflow:hidden;"><div class="t" style="left:0.5px;top:1.15px;font-size:8.8px;color:#161616;transform:scaleX(0.8)">13.33333</div></div>
<div class="t" style="left:341.20px;top:108.80px;font-size:8.8px;color:#161616;transform:scaleX(0.8);">1</div>
<div class="t" style="left:367.30px;top:108.80px;font-size:8.8px;color:#161616;transform:scaleX(0.8);">5</div>
<div class="t" style="left:393.00px;top:108.80px;font-size:8.8px;color:#161616;transform:scaleX(0.8);">10000</div>
<div class="a" style="left:314.8px;top:118.6px;width:24.7px;height:10px;overflow:hidden;"><div class="t" style="left:0.5px;top:1.15px;font-size:8.8px;color:#161616;transform:scaleX(0.8)">20</div></div>
<div class="t" style="left:341.20px;top:119.75px;font-size:8.8px;color:#161616;transform:scaleX(0.8);">1</div>
<div class="t" style="left:367.30px;top:119.75px;font-size:8.8px;color:#161616;transform:scaleX(0.8);">5</div>
<div class="a" style="left:391.60px;top:118.70px;width:25.40px;height:10.00px;background:#3a8ee6;"></div>
<div class="t" style="left:393.00px;top:119.75px;font-size:8.8px;color:#dff0ff;transform:scaleX(0.8);">10000</div>
<div class="a" style="left:425.00px;top:96.00px;width:11.00px;height:52.50px;background:#f8f8f8;"></div>
<div class="a" style="left:425.40px;top:107.30px;width:9.20px;height:10.70px;background:#cdcdcd;"></div>
<svg class="a" style="left:425px;top:96px" width="11" height="53"><path d="M2.5 7 L5 4.5 L7.5 7" fill="none" stroke="#333" stroke-width="1"/><path d="M2.5 45.5 L5 48 L7.5 45.5" fill="none" stroke="#333" stroke-width="1"/></svg>
<div class="t" style="left:436.20px;top:72.89px;font-size:8.4px;color:#161616;transform:scaleX(0.835);">Vyplňte poslední průchod, nechte</div>
<div class="t" style="left:436.20px;top:81.19px;font-size:8.4px;color:#161616;transform:scaleX(0.835);">doplnit a případně upravte.</div>
<div class="a" style="left:447.50px;top:91.20px;width:87.50px;height:13.80px;background:#f0f0f0;box-sizing:border-box;border:1px solid #505050;box-shadow:inset 1px 1px #fff, inset -1px -1px #8a8a8a;"></div>
<div class="t" style="left:391.25px;width:200px;text-align:center;top:93.76px;font-size:8.4px;color:#161616;transform-origin:50% 0;transform:scaleX(0.835);">Konst. přírůstek hloubky</div>
<div class="a" style="left:447.50px;top:106.30px;width:87.50px;height:12.50px;background:#f0f0f0;box-sizing:border-box;border-right:1px solid #6a6a6a;border-bottom:1px solid #6a6a6a;box-shadow:inset 1px 1px #fff, inset -1px -1px #c8c8c8;"></div>
<div class="t" style="left:391.25px;width:200px;text-align:center;top:108.21px;font-size:8.4px;color:#161616;transform-origin:50% 0;transform:scaleX(0.835);">Smazat tabulku</div>
<div class="t" style="left:387.50px;width:200px;text-align:center;top:119.69px;font-size:8.4px;color:#161616;transform-origin:50% 0;transform:scaleX(0.835);">Poznámky</div>
<div class="a" style="left:438.80px;top:128.80px;width:111.20px;height:18.70px;background:#fff;border-top:1px solid #6e6e6e;border-left:1px solid #6e6e6e;box-sizing:border-box;"></div>
<div class="a" style="left:287.50px;top:156.20px;width:26.50px;height:11.40px;background:#ffff00;border-top:1px solid #6e6e6e;border-left:1px solid #6e6e6e;box-sizing:border-box;"></div>
<div class="t" style="left:289.70px;top:158.15px;font-size:8.8px;color:#161616;transform:scaleX(0.8);">0</div>
<div class="t" style="left:318.80px;top:158.19px;font-size:8.4px;color:#d43a4a;transform:scaleX(0.835);">Hloubka rychloposuvem</div>
<div class="t" style="left:413.70px;top:158.89px;font-size:8.4px;color:#161616;transform:scaleX(0.835);">Prodleva na roztočení vřetena [s]</div>
<div class="a" style="left:519.30px;top:155.80px;width:25.40px;height:11.80px;background:#fff;border-top:1px solid #6e6e6e;border-left:1px solid #6e6e6e;box-sizing:border-box;"></div>
<div class="t" style="left:521.50px;top:158.15px;font-size:8.8px;color:#161616;transform:scaleX(0.8);">2</div>
<div class="a" style="left:287.50px;top:176.90px;width:104.10px;height:56.90px;border:1px solid #cfcfcf;box-shadow:inset 1px 1px #fff, 1px 1px #fff;box-sizing:border-box;"></div>
<div class="a" style="left:292.00px;top:173.90px;width:94.50px;height:6.00px;background:#f0f0f0;"></div>
<div class="t" style="left:294.00px;top:173.69px;font-size:8.4px;color:#161616;transform:scaleX(0.835);">Laser, vodní paprsek, plasma</div>
<div class="a" style="left:293.40px;top:187.00px;width:8.00px;height:8.50px;border-top:1px solid #7a7a7a;border-left:1px solid #7a7a7a;background:#f4f4f4;box-sizing:border-box;"></div>
<div class="t" style="left:305.40px;top:186.89px;font-size:8.4px;color:#161616;transform:scaleX(0.835);">Použít</div>
<div class="a" style="left:292.30px;top:202.00px;width:25.40px;height:11.50px;background:#fff;border-top:1px solid #6e6e6e;border-left:1px solid #6e6e6e;box-sizing:border-box;"></div>
<div class="t" style="left:294.50px;top:204.05px;font-size:8.8px;color:#161616;transform:scaleX(0.8);">0</div>
<div class="t" style="left:321.00px;top:204.09px;font-size:8.4px;color:#161616;transform:scaleX(0.835);">Prodleva zapnutí [s]</div>
<div class="a" style="left:292.30px;top:217.20px;width:25.40px;height:11.80px;background:#f6f6f6;border-top:1px solid #a8a8a8;border-left:1px solid #a8a8a8;box-sizing:border-box;"></div>
<div class="t" style="left:294.50px;top:219.55px;font-size:8.8px;color:#a8a8a8;transform:scaleX(0.8);">0</div>
<div class="t" style="left:321.00px;top:219.29px;font-size:8.4px;color:#a8a8a8;transform:scaleX(0.835);">Prodleva vypnutí [s]</div>
<div class="a" style="left:396.50px;top:176.30px;width:153.00px;height:57.50px;border:1px solid #cfcfcf;box-shadow:inset 1px 1px #fff, 1px 1px #fff;box-sizing:border-box;"></div>
<div class="a" style="left:400.50px;top:173.30px;width:45.50px;height:6.00px;background:#f0f0f0;"></div>
<div class="t" style="left:402.50px;top:173.09px;font-size:8.4px;color:#161616;transform:scaleX(0.835);">Výjezd z řezu</div>
<svg class="a" style="left:399px;top:182.0px" width="10" height="10"><path d="M7.2 2.6 A3.2 3.2 0 1 0 7.2 7.4" fill="none" stroke="#6a6a6a" stroke-width="0.9"/><circle cx="5.1" cy="5" r="1.3" fill="#111"/></svg>
<div class="t" style="left:411.50px;top:182.99px;font-size:8.4px;color:#161616;transform:scaleX(0.835);">Rychloposuvem</div>
<svg class="a" style="left:399px;top:191.1px" width="10" height="10"><path d="M7.2 2.6 A3.2 3.2 0 1 0 7.2 7.4" fill="none" stroke="#6a6a6a" stroke-width="0.9"/></svg>
<div class="t" style="left:411.50px;top:192.09px;font-size:8.4px;color:#2a2a6a;transform:scaleX(0.835);">Zapich rychlostí</div>
<svg class="a" style="left:399px;top:200.2px" width="10" height="10"><path d="M7.2 2.6 A3.2 3.2 0 1 0 7.2 7.4" fill="none" stroke="#6a6a6a" stroke-width="0.9"/></svg>
<div class="t" style="left:411.50px;top:201.19px;font-size:8.4px;color:#2a2a6a;transform:scaleX(0.835);">Zapich rychlostí s reverzací vřetene</div>
<svg class="a" style="left:399px;top:209.3px" width="10" height="10"><path d="M7.2 2.6 A3.2 3.2 0 1 0 7.2 7.4" fill="none" stroke="#6a6a6a" stroke-width="0.9"/></svg>
<div class="t" style="left:411.50px;top:210.29px;font-size:8.4px;color:#2a2a6a;transform:scaleX(0.835);">Závitový cykl G63&nbsp;&nbsp;(jen Sinumeric)</div>
<div class="a" style="left:401.30px;top:221.00px;width:8.00px;height:8.50px;border-top:1px solid #7a7a7a;border-left:1px solid #7a7a7a;background:#f4f4f4;box-sizing:border-box;"></div>
<div class="t" style="left:411.50px;top:221.19px;font-size:8.4px;color:#a8a8a8;transform:scaleX(0.835);">Nevyjíždět mezi průchody</div>
<div class="a" style="left:287.60px;top:242.80px;width:261.90px;height:28.40px;border:1px solid #cfcfcf;box-shadow:inset 1px 1px #fff, 1px 1px #fff;box-sizing:border-box;"></div>
<div class="a" style="left:292.00px;top:239.80px;width:31.00px;height:6.00px;background:#f0f0f0;"></div>
<div class="t" style="left:294.00px;top:239.59px;font-size:8.4px;color:#161616;transform:scaleX(0.835);">Chlazení</div>
<svg class="a" style="left:292.2px;top:248.6px" width="10" height="10"><path d="M7.2 2.6 A3.2 3.2 0 1 0 7.2 7.4" fill="none" stroke="#6a6a6a" stroke-width="0.9"/><circle cx="5.1" cy="5" r="1.3" fill="#111"/></svg>
<div class="t" style="left:304.50px;top:249.59px;font-size:8.4px;color:#161616;transform:scaleX(0.835);">Žádné</div>
<svg class="a" style="left:292.2px;top:258.5px" width="10" height="10"><path d="M7.2 2.6 A3.2 3.2 0 1 0 7.2 7.4" fill="none" stroke="#6a6a6a" stroke-width="0.9"/></svg>
<div class="t" style="left:304.50px;top:259.49px;font-size:8.4px;color:#161616;transform:scaleX(0.835);">Vzduch</div>
<svg class="a" style="left:338.5px;top:248.6px" width="10" height="10"><path d="M7.2 2.6 A3.2 3.2 0 1 0 7.2 7.4" fill="none" stroke="#6a6a6a" stroke-width="0.9"/></svg>
<div class="t" style="left:351.00px;top:249.59px;font-size:8.4px;color:#161616;transform:scaleX(0.835);">Proud kapaliny (M8)</div>
<svg class="a" style="left:338.5px;top:258.5px" width="10" height="10"><path d="M7.2 2.6 A3.2 3.2 0 1 0 7.2 7.4" fill="none" stroke="#6a6a6a" stroke-width="0.9"/></svg>
<div class="t" style="left:351.00px;top:259.49px;font-size:8.4px;color:#161616;transform:scaleX(0.835);">Mlha (M7)</div>
<div class="a" style="left:442.60px;top:246.50px;width:8.00px;height:8.50px;border-top:1px solid #7a7a7a;border-left:1px solid #7a7a7a;background:#f4f4f4;box-sizing:border-box;"></div>
<div class="t" style="left:454.20px;top:245.29px;font-size:8.4px;color:#2a2a6a;transform:scaleX(0.835);">Chladit i při přejezdech</div>
<div class="a" style="left:424.00px;top:255.60px;width:25.70px;height:12.20px;background:#fff;border-top:1px solid #6e6e6e;border-left:1px solid #6e6e6e;box-sizing:border-box;"></div>
<div class="t" style="left:426.20px;top:258.35px;font-size:8.8px;color:#161616;transform:scaleX(0.8);">0</div>
<div class="t" style="left:454.20px;top:258.39px;font-size:8.4px;color:#161616;transform:scaleX(0.835);">Prodleva pro spuštění [s]</div>
<div class="a" style="left:287.60px;top:279.00px;width:261.90px;height:20.00px;border:1px solid #cfcfcf;box-shadow:inset 1px 1px #fff, 1px 1px #fff;box-sizing:border-box;"></div>
<div class="a" style="left:292.00px;top:276.00px;width:94.50px;height:6.00px;background:#f0f0f0;"></div>
<div class="t" style="left:294.00px;top:275.79px;font-size:8.4px;color:#161616;transform:scaleX(0.835);">Ofuk nástroje po vyjetí z řezu</div>
<div class="a" style="left:294.10px;top:286.60px;width:8.00px;height:8.50px;border-top:1px solid #7a7a7a;border-left:1px solid #7a7a7a;background:#f4f4f4;box-sizing:border-box;"></div>
<div class="t" style="left:305.40px;top:286.69px;font-size:8.4px;color:#161616;transform:scaleX(0.835);">Použít</div>
<div class="a" style="left:339.00px;top:284.00px;width:25.30px;height:11.60px;background:#fff;border-top:1px solid #6e6e6e;border-left:1px solid #6e6e6e;box-sizing:border-box;"></div>
<div class="t" style="left:341.20px;top:286.15px;font-size:8.8px;color:#161616;transform:scaleX(0.8);">1</div>
<div class="t" style="left:368.90px;top:286.69px;font-size:8.4px;color:#161616;transform:scaleX(0.835);">Počet</div>
<div class="a" style="left:424.00px;top:284.30px;width:25.70px;height:11.60px;background:#fff;border-top:1px solid #6e6e6e;border-left:1px solid #6e6e6e;box-sizing:border-box;"></div>
<div class="t" style="left:426.20px;top:286.45px;font-size:8.8px;color:#161616;transform:scaleX(0.8);">0</div>
<div class="t" style="left:455.50px;top:286.69px;font-size:8.4px;color:#161616;transform:scaleX(0.835);">Délka ofuku [s]</div>
<div class="a" style="left:287.60px;top:306.90px;width:261.90px;height:34.40px;border:1px solid #cfcfcf;box-shadow:inset 1px 1px #fff, 1px 1px #fff;box-sizing:border-box;"></div>
<div class="a" style="left:291.60px;top:303.90px;width:57.00px;height:6.00px;background:#f0f0f0;"></div>
<div class="t" style="left:293.60px;top:303.69px;font-size:8.4px;color:#161616;transform:scaleX(0.835);">Způsob obrobení</div>
<svg class="a" style="left:292.2px;top:314.8px" width="10" height="10"><path d="M7.2 2.6 A3.2 3.2 0 1 0 7.2 7.4" fill="none" stroke="#6a6a6a" stroke-width="0.9"/><circle cx="5.1" cy="5" r="1.3" fill="#111"/></svg>
<div class="t" style="left:305.00px;top:315.79px;font-size:8.4px;color:#161616;transform:scaleX(0.835);">Všechny objekty jedním průchodem, a pak další průchod</div>
<svg class="a" style="left:292.2px;top:327.6px" width="10" height="10"><path d="M7.2 2.6 A3.2 3.2 0 1 0 7.2 7.4" fill="none" stroke="#6a6a6a" stroke-width="0.9"/></svg>
<div class="t" style="left:305.00px;top:328.59px;font-size:8.4px;color:#161616;transform:scaleX(0.835);">Každý objekt všemi průchody, a pak další objekt</div>
<div class="a" style="left:287.60px;top:347.20px;width:261.90px;height:21.80px;border:1px solid #cfcfcf;box-shadow:inset 1px 1px #fff, 1px 1px #fff;box-sizing:border-box;"></div>
<div class="a" style="left:292.00px;top:344.20px;width:23.00px;height:6.00px;background:#f0f0f0;"></div>
<div class="t" style="left:294.00px;top:343.99px;font-size:8.4px;color:#161616;transform:scaleX(0.835);">Osa A</div>
<div class="a" style="left:339.00px;top:353.00px;width:43.50px;height:11.40px;background:#fff;border-top:1px solid #6e6e6e;border-left:1px solid #6e6e6e;box-sizing:border-box;"></div>
<div class="t" style="left:341.20px;top:354.95px;font-size:8.8px;color:#161616;transform:scaleX(0.8);">0</div>
<div class="t" style="left:385.20px;top:355.19px;font-size:8.4px;color:#161616;transform:scaleX(0.835);">Úhel natočení osy A (stupňů)</div>
<div class="a" style="left:158.50px;top:381.50px;width:99.70px;height:19.00px;background:#f0f0f0;box-sizing:border-box;border-right:1px solid #6a6a6a;border-bottom:1px solid #6a6a6a;box-shadow:inset 1px 1px #fff, inset -1px -1px #c8c8c8;"></div>
<div class="t" style="left:108.35px;width:200px;text-align:center;top:386.61px;font-size:8.5px;color:#161616;transform-origin:50% 0;transform:scaleX(0.81);">Společné parametry obrábění</div>
<div class="a" style="left:260.30px;top:381.50px;width:46.50px;height:19.00px;background:#f0f0f0;box-sizing:border-box;border-right:1px solid #6a6a6a;border-bottom:1px solid #6a6a6a;box-shadow:inset 1px 1px #fff, inset -1px -1px #c8c8c8;"></div>
<div class="t" style="left:183.55px;width:200px;text-align:center;top:386.61px;font-size:8.5px;color:#161616;transform-origin:50% 0;transform:scaleX(0.81);">Otevřít *.SET</div>
<div class="a" style="left:308.60px;top:381.50px;width:44.10px;height:19.00px;background:#f0f0f0;box-sizing:border-box;border-right:1px solid #6a6a6a;border-bottom:1px solid #6a6a6a;box-shadow:inset 1px 1px #fff, inset -1px -1px #c8c8c8;"></div>
<div class="t" style="left:230.65px;width:200px;text-align:center;top:386.61px;font-size:8.5px;color:#161616;transform-origin:50% 0;transform:scaleX(0.81);">Uložit *.SET</div>
<div class="a" style="left:355.00px;top:381.50px;width:50.00px;height:19.00px;background:#f0f0f0;box-sizing:border-box;border-right:1px solid #6a6a6a;border-bottom:1px solid #6a6a6a;box-shadow:inset 1px 1px #fff, inset -1px -1px #c8c8c8;"></div>
<div class="t" style="left:280.00px;width:200px;text-align:center;top:386.61px;font-size:8.5px;color:#161616;transform-origin:50% 0;transform:scaleX(0.81);">Kopírovat T</div>
<div class="a" style="left:410.00px;top:381.50px;width:41.80px;height:19.00px;background:#f0f0f0;box-sizing:border-box;border-right:1px solid #6a6a6a;border-bottom:1px solid #6a6a6a;box-shadow:inset 1px 1px #fff, inset -1px -1px #c8c8c8;"></div>
<div class="t" style="left:330.90px;width:200px;text-align:center;top:386.61px;font-size:8.5px;color:#161616;transform-origin:50% 0;transform:scaleX(0.81);">Návodka</div>
<div class="a" style="left:457.30px;top:381.50px;width:48.90px;height:19.00px;background:#f0f0f0;box-sizing:border-box;border-right:1px solid #6a6a6a;border-bottom:1px solid #6a6a6a;box-shadow:inset 1px 1px #fff, inset -1px -1px #c8c8c8;"></div>
<div class="t" style="left:388.95px;width:200px;text-align:center;top:386.61px;font-size:8.5px;color:#161616;transform-origin:50% 0;transform:scaleX(0.81);">Cancel</div>
<div class="a" style="left:510.00px;top:381.50px;width:47.60px;height:19.00px;background:#f0f0f0;box-sizing:border-box;border-right:1px solid #6a6a6a;border-bottom:1px solid #6a6a6a;box-shadow:inset 1px 1px #fff, inset -1px -1px #c8c8c8;"></div>
<div class="t" style="left:441.10px;width:200px;text-align:center;top:386.61px;font-size:8.5px;color:#161616;transform-origin:50% 0;transform:scaleX(0.81);">OK</div>
<svg class="a" style="left:465px;top:386px" width="12" height="12"><path d="M1.8 1.8 L9.2 9.8 M9.2 1.8 L1.8 9.8" stroke="#961818" stroke-width="2.3"/></svg>
<svg class="a" style="left:521px;top:384px" width="14" height="13"><path d="M1.5 6.5 L4.8 10.5 L12.2 1.8" fill="none" stroke="#1c6e38" stroke-width="2.4"/></svg>
</body></html>
